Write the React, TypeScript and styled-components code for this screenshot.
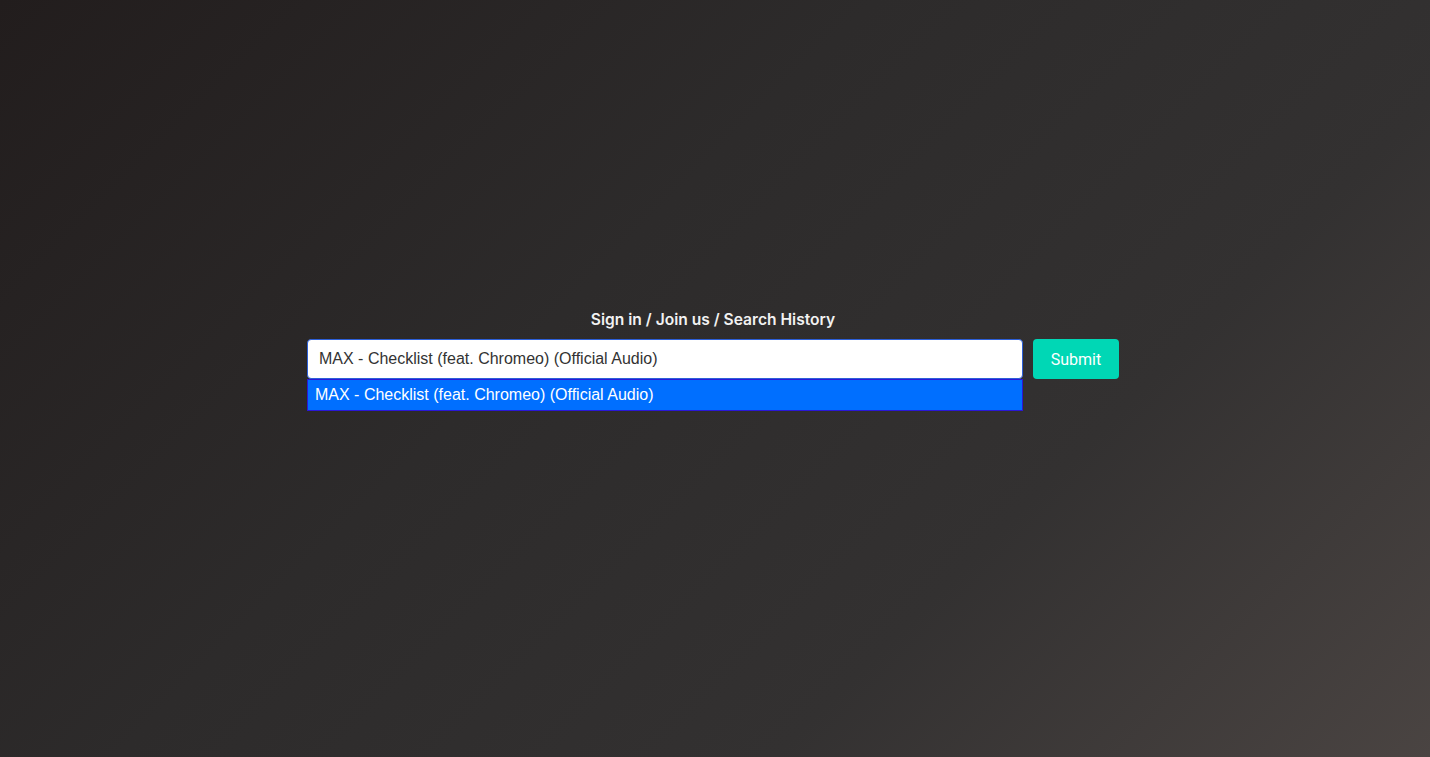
import styled, { createGlobalStyle } from "styled-components"
import React, { useState } from "react"

const GlobalStyle = createGlobalStyle`
  html, body {
    margin: 0;
    padding: 0;
    height: 100%;
  }
  #root {
    height: 100%;
  }
`

export const Page = styled.main`
  display: flex;
  flex-direction: column;
  align-items: center;
  justify-content: center;
  width: 100%;
  height: 757px;
  padding: 0 4px 68px 0;
  box-sizing: border-box;
  background: linear-gradient(135deg, #221d1d 0%, #2d2b2b 40%, #333131 70%, #4a4442 100%);
  font-family: Inter, "Noto Sans", sans-serif;
`

export const Title = styled.h1`
  margin: 0 0 10px 0;
  font-size: 15.6px;
  line-height: 19px;
  font-weight: 600;
  color: #f2f2f2;
  letter-spacing: 0;
`

export const SearchRow = styled.form`
  display: flex;
  align-items: flex-start;
  gap: 10px;
`

export const Field = styled.div`
  position: relative;
  width: 716px;
`

export const SearchInput = styled.input`
  display: block;
  width: 100%;
  height: 40px;
  box-sizing: border-box;
  padding: 0 11px;
  border: 1px solid #2c5fd8;
  border-radius: 4px;
  background: #ffffff;
  color: #333333;
  font-size: 16px;
  font-family: "Liberation Sans", Arial, sans-serif;
  outline: none;
`

export const Suggestions = styled.ul`
  position: absolute;
  top: 40px;
  left: 0;
  right: 0;
  margin: 0;
  padding: 0;
  list-style: none;
  border: 1px solid #2a18d6;
  background: #ffffff;
`

export const Suggestion = styled.li<{ $active?: boolean }>`
  height: 30px;
  line-height: 30px;
  padding: 0 7px;
  font-size: 16px;
  font-family: "Liberation Sans", Arial, sans-serif;
  background: ${(p) => (p.$active ? "#006fff" : "#ffffff")};
  color: ${(p) => (p.$active ? "#ffffff" : "#333333")};
  cursor: pointer;
`

export const SubmitButton = styled.button`
  width: 86px;
  height: 40px;
  border: none;
  border-radius: 4px;
  background: #00d7b5;
  color: #ffffff;
  font-size: 16px;
  font-family: Roboto, "Noto Sans", sans-serif;
  cursor: pointer;
`

const song = "MAX - Checklist (feat. Chromeo) (Official Audio)"

export default function App() {
  const [query, setQuery] = useState(song)

  return (
    <>
      <GlobalStyle />
      <Page>
        <Title>Sign in / Join us / Search History</Title>
        <SearchRow onSubmit={(e) => e.preventDefault()}>
          <Field>
            <SearchInput
              type="text"
              value={query}
              onChange={(e) => setQuery(e.target.value)}
            />
            <Suggestions>
              <Suggestion $active>{song}</Suggestion>
            </Suggestions>
          </Field>
          <SubmitButton type="submit">Submit</SubmitButton>
        </SearchRow>
      </Page>
    </>
  )
}
